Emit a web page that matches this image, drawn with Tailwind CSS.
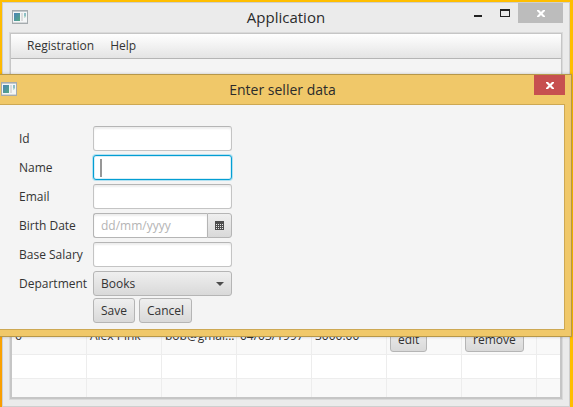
<!DOCTYPE html>
<html lang="en">
<head>
<meta charset="utf-8">
<title>Application</title>
<script src="https://cdn.jsdelivr.net/npm/@tailwindcss/browser@4"></script>
</head>
<body class="relative h-screen overflow-hidden bg-[#ffbe00] bg-linear-to-tr from-[#f99d00] via-[#ffbe00] to-[#ffbe00] pt-0.5 pr-[3px] pl-0.5 font-['Open_Sans','Noto_Sans',sans-serif] text-xs text-[#333]">
<svg class="absolute h-0 w-0" aria-hidden="true">
  <defs><linearGradient id="pane" x1="0" y1="0" x2="1" y2="1"><stop offset="0" stop-color="#4a83b8"/><stop offset="1" stop-color="#55a883"/></linearGradient></defs>
  <symbol id="app" viewBox="0 0 16 14">
    <rect x=".5" y=".5" width="15" height="13" fill="#f4f6f7" stroke="#a5abae"/>
    <path d="M1 1.5h14" stroke="#c3c9cd"/>
    <rect x="2" y="3" width="6" height="8" fill="url(#pane)"/>
    <rect x="9" y="3" width="2" height="8" fill="#dcdcdc"/>
    <rect x="12" y="3" width="2" height="3" fill="#8dbfc5"/><path d="M12 6h2v1l-2 1z" fill="#b2d8ca"/>
    <path d="M1 12.5h14" stroke="#d5d8da"/>
  </symbol>
  <symbol id="close" viewBox="0 0 8 7"><path d="M0 0h2l2 2 2-2h2v1L5.500 3.500 8 6v1H6L4 5 2 7H0V6l2.500-2.500L0 1z" fill="#fff"/></symbol>
</svg>

<main class="flex h-full flex-col border border-[#cfcfcf] bg-[#ebebeb] px-[7px] pb-[7px]">
  <header class="relative flex h-[30px] shrink-0 items-start">
    <svg class="mt-[7px] ml-0.5 h-3.5 w-4"><use href="#app"/></svg>
    <h1 class="absolute inset-x-0 top-1 text-center text-[15px] leading-5 text-[#2b2b2b]">Application</h1>
    <div class="relative -mr-px ml-auto flex h-5">
      <button class="flex w-7 items-center justify-center" aria-label="Minimize"><svg class="mt-1.5 h-0.5 w-2"><rect width="8" height="2" fill="#222"/></svg></button>
      <button class="flex w-[26px] items-center justify-center" aria-label="Maximize"><svg class="h-2 w-2.5" viewBox="0 0 10 8"><path d="M0 0h10v8H0zM1 2v5h8V2z" fill="#222" fill-rule="evenodd"/></svg></button>
      <button class="flex w-[45px] items-center justify-center bg-[#bcbcbc]" aria-label="Close"><svg class="mt-px h-[7px] w-2"><use href="#close"/></svg></button>
    </div>
  </header>

  <div class="flex min-h-0 flex-1 flex-col border border-[#c6c6c6] bg-[#f4f4f4] shadow-[0_0_0_1px_#dadada]">
    <nav class="flex h-[25px] shrink-0 items-center gap-4 border-b border-[#b5b5b5] bg-linear-to-b from-white to-[#e4e4e4] px-4">
      <button>Registration</button>
      <button>Help</button>
    </nav>
    <div class="mt-auto h-[75px] shrink-0 overflow-hidden border-x border-b border-[#c6c6c6]">
      <table class="w-full table-fixed border-separate border-spacing-0 bg-white" aria-label="Sellers">
        <colgroup><col class="w-[75px]"><col class="w-[75px]"><col class="w-[75px]"><col class="w-[75px]"><col class="w-[75px]"><col class="w-[75px]"><col class="w-[75px]"><col></colgroup>
        <tbody class="align-top [&_td]:border-r [&_td]:border-b [&_td]:border-[#ededed] [&_td]:py-0 [&_td]:pr-0 [&_td]:pl-[3px] [&_td:last-child]:border-r-0">
          <tr class="h-8 bg-[#f9f9f9]">
            <td class="leading-[26px]">6</td>
            <td class="leading-[26px]">Alex Pink</td>
            <td class="leading-[26px] whitespace-nowrap">bob@gmai...</td>
            <td class="leading-[26px]">04/03/1997</td>
            <td class="leading-[26px]">3000.00</td>
            <td><div class="flex pt-1"><button class="h-[25px] rounded-[3px] border border-[#b5b5b5] bg-linear-to-b from-[#efefef] to-[#d9d9d9] px-[7px]">edit</button></div></td>
            <td><div class="flex pt-1"><button class="h-[25px] rounded-[3px] border border-[#b5b5b5] bg-linear-to-b from-[#efefef] to-[#d9d9d9] px-[7px]">remove</button></div></td>
            <td></td>
          </tr>
          <tr class="h-6"><td></td><td></td><td></td><td></td><td></td><td></td><td></td><td></td></tr>
          <tr class="h-6 bg-[#f9f9f9]"><td></td><td></td><td></td><td></td><td></td><td></td><td></td><td></td></tr>
        </tbody>
      </table>
    </div>
  </div>
</main>

<section role="dialog" aria-labelledby="dialog-title" class="absolute top-[74px] right-px left-0 border-y border-r border-[#b69749] bg-[#f0c869] pr-1.5 pb-1.5 shadow-[0_0_3px_rgba(0,0,0,0.2)]">
  <header class="relative flex h-[29px] items-start">
    <svg class="mt-[7px] ml-px h-3.5 w-4"><use href="#app"/></svg>
    <h2 id="dialog-title" class="absolute inset-x-0 top-1 text-center text-sm leading-[22px] text-[#2b2b2b]">Enter seller data</h2>
    <button class="relative ml-auto flex h-5 w-[31px] items-center justify-center bg-[#c75050]" aria-label="Close dialog"><svg class="mt-px h-[7px] w-2"><use href="#close"/></svg></button>
  </header>
  <form class="border-y border-r border-[#cda853] bg-[#f4f4f4] pt-[21px] pb-1.5 pl-[19px]">
    <div class="grid grid-cols-[74px_139px] items-center gap-y-1">
      <label for="id">Id</label>
      <input id="id" class="h-[25px] w-full rounded-[3px] border border-[#c4c4c4] border-t-[#b5b5b5] bg-white px-[7px] shadow-[inset_0_2px_2px_#eee]">
      <label for="name">Name</label>
      <div class="relative">
        <input id="name" class="block h-[25px] w-full rounded-[3px] border border-[#039ed3] bg-white px-[7px] caret-transparent shadow-[0_0_0_1px_#b3e1f1,inset_0_0_0_1px_#d9eff7] outline-none">
        <span class="absolute top-1 left-[7px] h-[18px] w-0.5 bg-[#979797]"></span>
      </div>
      <label for="email">Email</label>
      <input id="email" type="email" class="h-[25px] w-full rounded-[3px] border border-[#c4c4c4] border-t-[#b5b5b5] bg-white px-[7px] shadow-[inset_0_2px_2px_#eee]">
      <label for="birth">Birth Date</label>
      <div class="flex">
        <input id="birth" placeholder="dd/mm/yyyy" class="h-[25px] min-w-0 flex-1 rounded-l-[3px] border border-r-0 border-[#b5b5b5] bg-white px-[7px] shadow-[inset_0_2px_2px_#eee] placeholder:text-[#b4b4b4]">
        <button type="button" aria-label="Choose date" class="flex h-[25px] w-[25px] items-center justify-center rounded-r-[3px] border border-[#b5b5b5] bg-linear-to-b from-[#efefef] to-[#d9d9d9]">
          <svg class="h-[9px] w-[9px]" viewBox="0 0 9 9" shape-rendering="crispEdges"><path d="M0 0h9v9H0z" fill="#4d4d4d"/><path d="M1 3.500h7M1 5.500h7M1 7.500h7" stroke="#e6e6e6" stroke-dasharray="1"/></svg>
        </button>
      </div>
      <label for="salary">Base Salary</label>
      <input id="salary" class="h-[25px] w-full rounded-[3px] border border-[#c4c4c4] border-t-[#b5b5b5] bg-white px-[7px] shadow-[inset_0_2px_2px_#eee]">
      <label for="department">Department</label>
      <div class="relative">
        <select id="department" class="block h-[25px] w-full appearance-none rounded-[3px] border border-[#b5b5b5] bg-linear-to-b from-[#efefef] to-[#d9d9d9] px-[7px]"><option>Books</option></select>
        <svg class="pointer-events-none absolute top-[11px] right-2 h-1 w-2" viewBox="0 0 8 4"><path d="M0 0h8L4 4z" fill="#4d4d4d"/></svg>
      </div>
    </div>
    <div class="mt-0.5 ml-[74px] flex gap-1">
      <button type="button" class="h-[25px] rounded-[3px] border border-[#b5b5b5] bg-linear-to-b from-[#efefef] to-[#d9d9d9] px-[7px]">Save</button>
      <button type="button" class="h-[25px] rounded-[3px] border border-[#b5b5b5] bg-linear-to-b from-[#efefef] to-[#d9d9d9] px-[7px]">Cancel</button>
    </div>
  </form>
</section>
</body>
</html>
